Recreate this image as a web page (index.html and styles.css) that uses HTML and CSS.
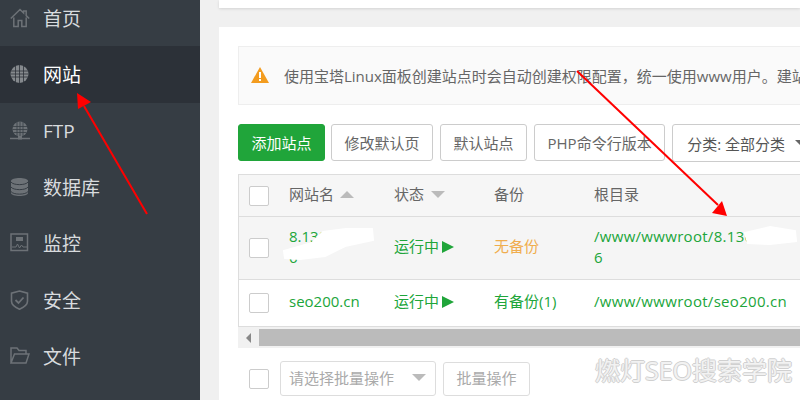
FILE: index.html
```html
<!DOCTYPE html>
<html lang="zh-CN">
<head>
    <meta charset="UTF-8">
    <title>网站 - 宝塔Linux面板</title>
    <link rel="stylesheet" href="styles.css">
</head>
<body>
    <aside class="sidebar">
        <a class="nav-item">
            <svg class="nav-icon" viewBox="0 0 20 20"><path d="M.8 10.500 10 1.500l3.600 3.500V3h2.600v4.600l3 2.900M3.800 9.500V18.500h4.400v-6h3.600v6h4.400V9.500" fill="none" stroke="#6d7277" stroke-width="1.500"/></svg>
            <span>首页</span>
        </a>
        <a class="nav-item active">
            <svg class="nav-icon" viewBox="0 0 20 20"><circle cx="9.500" cy="10" r="9" fill="#85898d"/><path d="M.5 7h18M.5 10h18M.5 13h18M5.500 1.500v17M9.500 1v18M13.500 1.500v17" stroke="#2c3138" stroke-width=".8"/></svg>
            <span>网站</span>
        </a>
        <a class="nav-item">
            <svg class="nav-icon" viewBox="0 0 20 20"><circle cx="10" cy="8" r="7.500" fill="#6d7277"/><path d="M3 5.500h14M2.500 8.500h15M3.500 11.500h13M7 1v14M10 .5v15M13 1v14" stroke="#363d44" stroke-width=".8"/><path d="M0 17.500h20" stroke="#6d7277" stroke-width="1.500"/><rect x="8" y="15" width="4" height="3.500" fill="#6d7277"/></svg>
            <span>FTP</span>
        </a>
        <a class="nav-item">
            <svg class="nav-icon" viewBox="0 0 20 20"><path d="M1 4c0-4 17-4 17 0v12c0 4-17 4-17 0z" fill="#6d7277"/><path d="M1 5c2 3.500 15 3.500 17 0M1 10c2 3.500 15 3.500 17 0M1 14.500c2 3.500 15 3.500 17 0" fill="none" stroke="#363d44" stroke-width="1"/></svg>
            <span>数据库</span>
        </a>
        <a class="nav-item">
            <svg class="nav-icon" viewBox="0 0 20 20"><rect x="1" y="1" width="16.500" height="16.500" fill="none" stroke="#6d7277" stroke-width="1.500"/><rect x="6" y="4" width="7" height="4" fill="#6d7277"/><path d="M2 14h4l1.500-3 2 4 2-3 1.500 2h4" fill="none" stroke="#6d7277"/></svg>
            <span>监控</span>
        </a>
        <a class="nav-item">
            <svg class="nav-icon" viewBox="0 0 20 20"><path d="M9.500 1 17.500 3.200v8c0 3.500-3.500 6-8 8-4.500-2-8-4.500-8-8v-8z" fill="none" stroke="#6d7277" stroke-width="1.600"/><path d="M5.500 10 8.500 13l5-5.500" fill="none" stroke="#6d7277" stroke-width="1.800"/></svg>
            <span>安全</span>
        </a>
        <a class="nav-item">
            <svg class="nav-icon" viewBox="0 0 20 20"><path d="M1 17V2h6l2 2.500h7V8M1 17h15l3-9H4.500L1 17z" fill="none" stroke="#6d7277" stroke-width="1.500"/></svg>
            <span>文件</span>
        </a>
    </aside>

    <main class="content">
        <div class="top-card"></div>
        <section class="panel">
            <div class="notice">
                <svg class="notice-icon" viewBox="0 0 18 16"><path d="M9 0l9 16H0z" fill="#f39c1f"/><path d="M9 5v6M9 12v2" stroke="#fff" stroke-width="2"/></svg>
                <span>使用宝塔Linux面板创建站点时会自动创建权限配置，统一使用www用户。建站</span>
            </div>

            <div class="toolbar">
                <button class="btn btn-green">添加站点</button>
                <button class="btn">修改默认页</button>
                <button class="btn">默认站点</button>
                <button class="btn">PHP命令行版本</button>
                <div class="category">分类: 全部分类<i class="caret"></i></div>
            </div>

            <div class="table-box">
                <div class="row head">
                    <div class="cell check"><i class="checkbox"></i></div>
                    <div class="cell name">网站名<i class="sort-up"></i></div>
                    <div class="cell status">状态<i class="caret caret-light"></i></div>
                    <div class="cell backup">备份</div>
                    <div class="cell path">根目录</div>
                </div>
                <div class="row row-one">
                    <div class="cell check"><i class="checkbox"></i></div>
                    <div class="cell name link">8.130.<br>6</div>
                    <div class="cell status link">运行中<i class="play"></i></div>
                    <div class="cell backup orange">无备份</div>
                    <div class="cell path link">/www/wwwroot/8.130.<br>6</div>
                </div>
                <div class="row row-two">
                    <div class="cell check"><i class="checkbox"></i></div>
                    <div class="cell name link">seo200.cn</div>
                    <div class="cell status link">运行中<i class="play"></i></div>
                    <div class="cell backup link">有备份(1)</div>
                    <div class="cell path link">/www/wwwroot/seo200.cn</div>
                </div>
            </div>

            <div class="scrollbar">
                <i class="scroll-arrow"></i>
                <div class="scroll-thumb"></div>
            </div>

            <div class="batch">
                <i class="checkbox"></i>
                <div class="batch-select">请选择批量操作<i class="caret caret-light"></i></div>
                <button class="btn batch-btn">批量操作</button>
            </div>
        </section>
    </main>

    <!-- redaction smears and annotation arrows drawn over the shot -->
    <svg class="overlay" viewBox="0 0 800 400">
        <path d="M323 232 346 229 372 229 373 240 345 246 325 256 300 259 285 258 284 251 312 243z" fill="#fff" stroke="#fff" stroke-width="2"/>
        <path d="M745 233 770 227 795 231 796 241 770 244 748 243z" fill="#fff" stroke="#fff" stroke-width="2"/>
        <path d="M147 214 84 106" stroke="#f00" stroke-width="2" fill="none"/>
        <path d="M77 93 91 102 78 109z" fill="#f00"/>
        <path d="M577 71 718 205" stroke="#f00" stroke-width="2" fill="none"/>
        <path d="M727 216 712 213 722 201z" fill="#f00"/>
    </svg>
    <div class="watermark">燃灯SEO搜索学院</div>
</body>
</html>
```

FILE: styles.css
```css
* {
    margin: 0;
    padding: 0;
    box-sizing: border-box;
}

body {
    width: 800px;
    height: 400px;
    overflow: hidden;
    display: flex;
    position: relative;
    font-family: "Open Sans", "Noto Sans CJK SC", sans-serif;
    font-size: 15px;
    color: #666;
    background: #f0f0f0;
}

i {
    display: inline-block;
}

.sidebar {
    width: 200px;
    flex-shrink: 0;
    background: #363d44;
    margin-top: -10px;
}

.nav-item {
    display: flex;
    align-items: center;
    height: 56.300px;
    padding-left: 10px;
    font-size: 19px;
    color: #d8dbde;
}

.nav-item.active {
    background: #2c3138;
    color: #fff;
}

.nav-icon {
    width: 20px;
    height: 20px;
    margin-right: 13px;
}

.content {
    flex: 1;
    min-width: 0;
    padding-left: 19px;
}

.top-card {
    height: 8px;
    background: #fff;
    box-shadow: 0 1px 3px rgba(0, 0, 0, 0.12);
    margin-bottom: 19px;
}

.panel {
    height: 373px;
    background: #fff;
    padding: 19px 0 0 19px;
    overflow: hidden;
}

.notice {
    display: flex;
    align-items: center;
    height: 59px;
    padding: 0 0 1px 12px;
    background: #fafafa;
    border: 1px solid #eee;
    border-right: 0;
    white-space: nowrap;
    overflow: hidden;
}

.notice-icon {
    width: 18px;
    height: 16px;
    margin-right: 15px;
    flex-shrink: 0;
}

.toolbar {
    display: flex;
    gap: 7px;
    margin-top: 19px;
    white-space: nowrap;
}

.btn {
    height: 37px;
    padding: 0 12.500px;
    flex-shrink: 0;
    font: inherit;
    color: #666;
    background: #fff;
    border: 1px solid #ccc;
    border-radius: 3px;
}

.btn-green {
    width: 87px;
    padding: 0;
    margin-right: -1px;
    color: #fff;
    background: #20a53a;
    border-color: #20a53a;
}

.category {
    display: flex;
    align-items: center;
    flex-shrink: 0;
    width: 160px;
    height: 38px;
    padding-left: 14px;
    border: 1px solid #ccc;
    border-radius: 3px;
    color: #555;
}

.caret {
    width: 0;
    height: 0;
    margin-left: 10px;
    border: 7px solid transparent;
    border-top: 7px solid #666;
    border-bottom: 0;
}

.caret-light {
    border-top-color: #bbb;
    vertical-align: 2px;
    margin-left: 7px;
}

.table-box {
    margin-top: 12px;
    border: 1px solid #ddd;
    border-right: 0;
}

.row {
    display: flex;
    align-items: center;
    border-bottom: 1px solid #ddd;
}

.row:last-child {
    border-bottom: 0;
}

.head {
    height: 42px;
    background: #f6f6f6;
}

.row-one {
    height: 63px;
    background: #f5f5f5;
}

.row-two {
    height: 46px;
}

.cell {
    flex-shrink: 0;
    line-height: 21px;
    padding-bottom: 3px;
}

.head .cell {
    padding-bottom: 2px;
}

.row .check {
    width: 50px;
    padding: 0 0 0 10px;
    display: flex;
}

.name {
    width: 105px;
}

.status {
    width: 100px;
}

.backup {
    width: 100px;
}

.path {
    width: 240px;
    white-space: nowrap;
}

.path.link {
    letter-spacing: 0.300px;
}

.link {
    color: #20a53a;
}

.orange {
    color: #f0ad4e;
}

.checkbox {
    width: 20px;
    height: 20px;
    flex-shrink: 0;
    background: #fff;
    border: 1px solid #ccc;
    border-radius: 2px;
}

.sort-up {
    width: 0;
    height: 0;
    margin-left: 6px;
    vertical-align: 2px;
    border: 7px solid transparent;
    border-bottom: 7px solid #bbb;
    border-top: 0;
}

.play {
    width: 0;
    height: 0;
    margin-left: 3px;
    vertical-align: -1px;
    border-left: 12px solid #20a53a;
    border-top: 6.500px solid transparent;
    border-bottom: 6.500px solid transparent;
}

.scrollbar {
    display: flex;
    align-items: center;
    height: 21px;
    background: #f1f1f1;
}

.scroll-arrow {
    width: 0;
    height: 0;
    margin: 0 8px;
    border-right: 5px solid #888;
    border-top: 5px solid transparent;
    border-bottom: 5px solid transparent;
}

.scroll-thumb {
    flex: 1;
    height: 17px;
    background: #bbb;
}

.batch {
    display: flex;
    align-items: center;
    margin-top: 13px;
    padding-left: 11px;
    white-space: nowrap;
}

.batch-select {
    display: flex;
    align-items: center;
    justify-content: space-between;
    width: 156px;
    height: 35px;
    margin: 0 7px 0 11px;
    padding: 0 9px 2px 8px;
    color: #aaa;
    border: 1px solid #ddd;
    border-radius: 3px;
}

.batch-btn {
    height: 34px;
    padding-bottom: 2px;
    color: #aaa;
    border-color: #ddd;
}

.overlay {
    position: absolute;
    left: 0;
    top: 0;
    width: 800px;
    height: 400px;
    pointer-events: none;
}

.watermark {
    position: absolute;
    left: 595px;
    top: 350px;
    font-size: 25px;
    line-height: 40px;
    white-space: nowrap;
    color: #f2f2f2;
    text-shadow: 1px 0 0 #d0d0d0, -1px 0 0 #d0d0d0, 0 1px 0 #d0d0d0, 0 -1px 0 #d0d0d0;
}
```
